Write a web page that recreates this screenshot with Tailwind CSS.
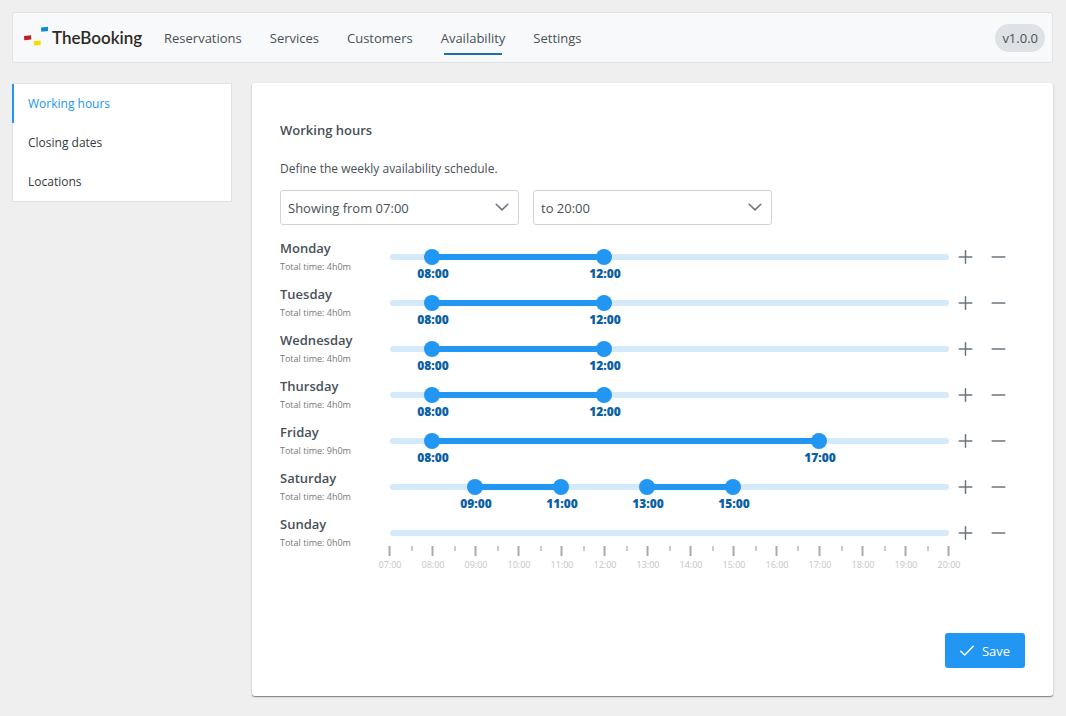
<!DOCTYPE html>
<html lang="en">
<head>
<meta charset="utf-8">
<meta name="viewport" content="width=device-width, initial-scale=1">
<title>TheBooking - Availability</title>
<script src="https://cdn.jsdelivr.net/npm/@tailwindcss/browser@4"></script>
</head>
<body class="min-h-screen bg-[#efefef] pt-3 pr-[13px] pb-5 pl-3 font-['Open_Sans','Noto_Sans',sans-serif] text-[13px] text-[#495057]">
<header class="flex h-[51px] items-center rounded-[3px] border border-[#dee2e6] bg-[#f8f9fa] pr-[7px] pl-[11px]">
  <a href="#" class="flex w-28 shrink-0 items-center gap-1" aria-label="TheBooking">
    <svg class="h-6 w-6 shrink-0" viewBox="0 0 24 24" aria-hidden="true">
      <path fill="#0a8bd6" d="M17 1.4 24 .8V5L17.3 5.8Z"/>
      <path fill="#c01f26" d="M0 10.1 7 9.2 7.3 13.4.3 14.2Z"/>
      <path fill="#fedb00" d="M9.6 15.2 16.7 14.6V18.9L10 19.6Z"/>
    </svg>
    <span class="font-['Lato',sans-serif] text-[17px] leading-6 font-semibold text-[#2d2a26]">TheBooking</span>
  </a>
  <nav class="flex grow items-center gap-7 pl-7">
    <a href="#" class="pt-[10px] pb-2">Reservations</a>
    <a href="#" class="pt-[10px] pb-2">Services</a>
    <a href="#" class="pt-[10px] pb-2">Customers</a>
    <a href="#" aria-current="page" class="relative pt-[10px] pb-2 after:absolute after:inset-x-[3px] after:bottom-px after:h-0.5 after:bg-[#1f6fa8]">Availability</a>
    <a href="#" class="pt-[10px] pb-2">Settings</a>
  </nav>
  <span class="rounded-full bg-[#dee2e6] px-[7px] py-1 leading-5">v1.0.0</span>
</header>

<div class="mt-5 flex items-start gap-5">
  <aside class="w-[220px] shrink-0 border border-[#dee2e6] bg-white text-xs">
    <nav class="-ml-px flex flex-col text-[#343a40]">
      <a href="#" aria-current="page" class="border-l-2 border-[#2196f3] py-[11px] pl-[14px] leading-[17px] text-[#2196f3]">Working hours</a>
      <a href="#" class="border-l-2 border-transparent py-[11px] pl-[14px] leading-[17px]">Closing dates</a>
      <a href="#" class="border-l-2 border-transparent py-[11px] pl-[14px] leading-[17px]">Locations</a>
    </nav>
  </aside>

  <main class="min-w-0 grow rounded-[3px] bg-white p-7 shadow-[0_1px_1px_rgba(0,0,0,0.4),0_1px_3px_rgba(0,0,0,0.12)]">
    <h1 class="pt-[10px] leading-[18px] font-semibold">Working hours</h1>
    <p class="mt-[21px] text-xs leading-[18px]">Define the weekly availability schedule.</p>
    <div class="mt-3 flex gap-[14px]">
      <div class="relative w-[239px]">
        <select aria-label="Start of the range" class="h-[35px] w-full appearance-none rounded-[3px] border border-[#ced4da] bg-white pt-0.5 pl-[7px]"><option>Showing from 07:00</option></select>
        <svg class="pointer-events-none absolute top-[10px] right-[10px] size-[14px]" viewBox="0 0 14 14" fill="none" stroke="#6c757d" stroke-width="1.5" stroke-linecap="round" stroke-linejoin="round" aria-hidden="true"><path d="M1.2 4.2 7 9.9 12.8 4.2"/></svg>
      </div>
      <div class="relative w-[239px]">
        <select aria-label="End of the range" class="h-[35px] w-full appearance-none rounded-[3px] border border-[#ced4da] bg-white pt-0.5 pl-[7px]"><option>to 20:00</option></select>
        <svg class="pointer-events-none absolute top-[10px] right-[10px] size-[14px]" viewBox="0 0 14 14" fill="none" stroke="#6c757d" stroke-width="1.5" stroke-linecap="round" stroke-linejoin="round" aria-hidden="true"><path d="M1.2 4.2 7 9.9 12.8 4.2"/></svg>
      </div>
    </div>

    <div id="days" class="mt-[14px]"></div>
    <div id="ticks" class="relative -mt-[15px] mr-[76px] ml-[110px] h-7" aria-hidden="true"></div>

    <div class="mt-[59px] flex justify-end">
      <button type="button" class="flex h-[35px] w-20 items-center justify-center gap-2 rounded-[3px] bg-[#2196f3] text-white">
        <svg class="size-[14px]" viewBox="0 0 14 14" fill="none" stroke="currentColor" stroke-width="1.4" stroke-linecap="round" stroke-linejoin="round" aria-hidden="true"><path d="M.8 7.2 4.8 11 13.2 2.2"/></svg>
        <span class="pt-0.5">Save</span>
      </button>
    </div>
  </main>
</div>

<script>
  const START = 7, END = 20;
  const pct = h => (h - START) / (END - START) * 100 + '%';
  const clock = h => String(h).padStart(2, '0') + ':00';
  const days = [
    ['Monday', [[8, 12]]],
    ['Tuesday', [[8, 12]]],
    ['Wednesday', [[8, 12]]],
    ['Thursday', [[8, 12]]],
    ['Friday', [[8, 17]]],
    ['Saturday', [[9, 11], [13, 15]]],
    ['Sunday', []],
  ];

  document.getElementById('days').innerHTML = days.map(([name, spans]) => {
    const total = spans.reduce((sum, [from, to]) => sum + to - from, 0);
    const fills = spans.map(([from, to]) =>
      `<div class="absolute top-0 h-1.5 bg-[#2196f3]" style="left:${pct(from)};width:calc(${pct(to)} - ${pct(from)})"></div>`).join('');
    const handles = spans.flat().map(h => `
      <input type="range" min="${START}" max="${END}" value="${h}" aria-label="${name} ${clock(h)}"
        class="pointer-events-none absolute -top-[5px] -left-[9px] h-4 w-[calc(100%+16px)] appearance-none bg-transparent [&::-webkit-slider-thumb]:pointer-events-auto [&::-webkit-slider-thumb]:size-4 [&::-webkit-slider-thumb]:appearance-none [&::-webkit-slider-thumb]:rounded-full [&::-webkit-slider-thumb]:bg-[#2196f3]">
      <span class="absolute top-3 -translate-x-1/2 text-xs leading-4 font-extrabold text-[#0b5fa5]" style="left:${pct(h)}">${clock(h)}</span>`).join('');
    return `
      <section class="flex h-[46px]">
        <div class="w-[110px] shrink-0">
          <h2 class="leading-[18px] font-semibold">${name}</h2>
          <p class="mt-[3px] text-[9px] leading-[14px] text-[#777]">Total time: ${total}h0m</p>
        </div>
        <div class="relative mt-[15px] h-1.5 grow rounded-full bg-[#d4e9fa]">${fills}${handles}</div>
        <div class="mr-[10px] flex h-9 text-[#6c757d]">
          <button type="button" class="flex w-[33px] items-center justify-center" aria-label="Add a time span on ${name}">
            <svg class="size-[15px]" viewBox="0 0 15 15" fill="none" stroke="currentColor" stroke-width="1.5" stroke-linecap="round"><path d="M7.5 .8V13.2M1.2 7H13.8"/></svg>
          </button>
          <button type="button" class="flex w-[33px] items-center justify-center" aria-label="Remove a time span on ${name}">
            <svg class="size-[15px]" viewBox="0 0 15 15" fill="none" stroke="currentColor" stroke-width="1.5" stroke-linecap="round"><path d="M1.2 7H13.8"/></svg>
          </button>
        </div>
      </section>`;
  }).join('');

  let ticks = '';
  for (let h = START; h <= END; h++) {
    ticks += `<div class="absolute top-0 flex -translate-x-1/2 flex-col items-center" style="left:${pct(h)}"><i class="h-[10px] w-0.5 bg-[#aaa]"></i><span class="mt-0.5 text-[9px] leading-[14px] text-[#c4c4c4]">${clock(h)}</span></div>`;
    if (h < END) ticks += `<i class="absolute top-0 -ml-px h-[5px] w-0.5 bg-[#ccc]" style="left:${pct(h + 0.5)}"></i>`;
  }
  document.getElementById('ticks').innerHTML = ticks;
</script>
</body>
</html>
